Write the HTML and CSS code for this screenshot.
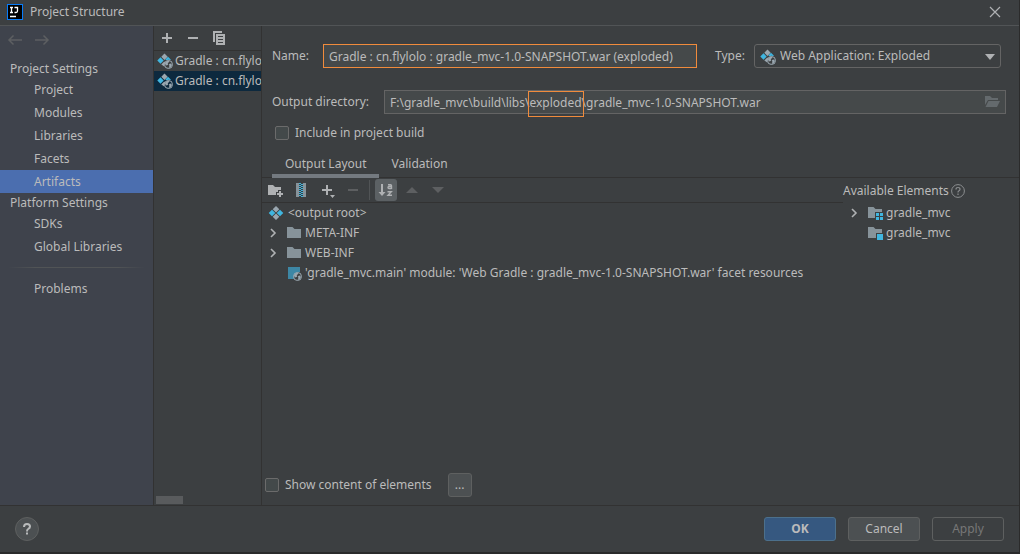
FILE: index.html
```html
<!DOCTYPE html>
<html lang="en">
<head>
<meta charset="utf-8">
<title>Project Structure</title>
<meta name="viewport" content="width=device-width, initial-scale=1">
<link rel="stylesheet" href="styles.css">
</head>
<body>
<svg class="defs" aria-hidden="true">
  <symbol id="artifact-web" viewBox="0 0 16 16">
    <path fill="#9aa7b0" d="M7.5 0.500l3.200 3.200-3.200 3.200-3.200-3.200z"/>
    <path fill="#40b6e0" d="M3.500 4.300l3.200 3.200-3.200 3.200L.3 7.500z"/>
    <path fill="#40b6e0" d="M11 3.800l3 3-1 .2a5 5 0 0 0-3.600.3L8.300 6.500z"/>
    <path fill="#9aa7b0" d="M7.300 8.500l1 1a5 5 0 0 0-.7 4.300L4.300 11.600z"/>
    <circle cx="11.500" cy="11.500" r="4" fill="none" stroke="#9aa7b0"/>
    <path fill="#9aa7b0" d="M8 10l2-2.300 2.700-.2-1 2-1 .5.600 1.500-1.600 1-1.500-1zM15 12l-1-1.500-2 .5.400 2.200-1 1.600 2.200-.3z"/>
  </symbol>
  <symbol id="artifact" viewBox="0 0 16 16">
    <path fill="#9aa7b0" d="M8 1l3.300 3.300L8 7.600 4.700 4.300zM8 8.400l3.300 3.300L8 15l-3.300-3.300z"/>
    <path fill="#40b6e0" d="M4 4.700L7.300 8 4 11.300.7 8zM12 4.700L15.300 8 12 11.300 8.700 8z"/>
  </symbol>
  <symbol id="folder" viewBox="0 0 16 16"><path fill="#87939a" d="M1 2h5.500l2 2H15v9H1z"/></symbol>
  <symbol id="folder-group" viewBox="0 0 16 16">
    <path fill="#87939a" d="M1 2h5.500l2 2H15v3H8v6H1z"/>
    <path fill="#40b6e0" d="M9 8h3v3H9zM13 8h3v3h-3zM9 12h3v3H9zM13 12h3v3h-3z"/>
  </symbol>
  <symbol id="folder-module" viewBox="0 0 16 16">
    <path fill="#87939a" d="M1 2h5.500l2 2H15v4H9v5H1z"/>
    <path fill="#40b6e0" d="M10 9h6v6h-6z"/>
  </symbol>
  <symbol id="chevron" viewBox="0 0 16 16"><path d="M6 4l4 4-4 4" fill="none" stroke="#afb1b3" stroke-width="1.600"/></symbol>
  <symbol id="plus" viewBox="0 0 16 16"><path d="M7 3h2v4h4v2H9v4H7V9H3V7h4z" fill="currentColor"/></symbol>
  <symbol id="minus" viewBox="0 0 16 16"><path d="M3 7h10v2H3z" fill="currentColor"/></symbol>
</svg>

<header class="titlebar">
  <svg class="logo" viewBox="0 0 16 16" aria-hidden="true">
    <path fill="#087cfa" d="M0 0h16v16H0z"/><path fill="#000" d="M1 1h14v14H1z"/>
    <path d="M3 3.500h3M3 8.500h3M4.500 3.500v5M7.500 3.500h3v3.500q0 1.500-1.500 1.500H7.500M3 12.500h6" fill="none" stroke="#fff" stroke-width="1.300"/>
  </svg>
  <h1 class="title">Project Structure</h1>
  <button class="icon-button close" aria-label="Close"><svg viewBox="0 0 16 16"><path d="M3 3l10 10M13 3L3 13" stroke="#afb1b3" stroke-width="1.200"/></svg></button>
</header>

<div class="workspace">
  <nav class="sidebar">
    <div class="history">
      <button class="icon-button" aria-label="Back" disabled><svg viewBox="0 0 16 16"><path d="M15 8H2.500M6.500 3.500L2 8l4.500 4.500" fill="none" stroke="currentColor" stroke-width="1.500"/></svg></button>
      <button class="icon-button" aria-label="Forward" disabled><svg viewBox="0 0 16 16"><path d="M1 8h12.500M9.500 3.500L14 8l-4.500 4.500" fill="none" stroke="currentColor" stroke-width="1.500"/></svg></button>
    </div>
    <h2 class="group">Project Settings</h2>
    <a class="link" href="#">Project</a>
    <a class="link" href="#">Modules</a>
    <a class="link" href="#">Libraries</a>
    <a class="link" href="#">Facets</a>
    <a class="link selected" href="#" aria-current="page">Artifacts</a>
    <h2 class="group">Platform Settings</h2>
    <a class="link" href="#">SDKs</a>
    <a class="link" href="#">Global Libraries</a>
    <hr class="divider">
    <a class="link" href="#">Problems</a>
  </nav>

  <section class="artifacts" aria-label="Artifacts">
    <div class="list-tools">
      <button class="icon-button" aria-label="Add"><svg><use href="#plus"/></svg></button>
      <button class="icon-button" aria-label="Remove"><svg><use href="#minus"/></svg></button>
      <button class="icon-button" aria-label="Copy"><svg viewBox="0 0 16 16"><path fill="#afb1b3" d="M2 1h9v2H4v9H2z"/><path fill="#afb1b3" fill-rule="evenodd" d="M5 4h9v11H5zM7 6v1h5V6zM7 9v1h5V9zM7 12v1h5v-1z"/></svg></button>
    </div>
    <ul class="list">
      <li class="row"><svg class="icon"><use href="#artifact-web"/></svg><span>Gradle : cn.flylolo</span></li>
      <li class="row current"><svg class="icon"><use href="#artifact-web"/></svg><span>Gradle : cn.flylolo</span></li>
    </ul>
    <div class="scrollbar"></div>
  </section>

  <main class="editor">
    <div class="form">
      <div class="name-line">
        <label for="name">Name:</label>
        <input class="field name" id="name" value="Gradle : cn.flylolo : gradle_mvc-1.0-SNAPSHOT.war (exploded)">
        <label class="type-label" for="type">Type:</label>
        <div class="type">
          <svg class="icon type-icon"><use href="#artifact-web"/></svg>
          <select class="type-select" id="type"><option>Web Application: Exploded</option></select>
          <svg class="type-arrow" viewBox="0 0 10 6"><path fill="#afb1b3" d="M0 0h10L5 6z"/></svg>
        </div>
      </div>
      <div class="dir-line">
        <label class="dir-label" for="dir">Output directory:</label>
        <div class="path">
          <input class="field" id="dir" value="F:\gradle_mvc\build\libs\exploded\gradle_mvc-1.0-SNAPSHOT.war">
          <span class="highlight"></span>
          <button class="icon-button browse" aria-label="Browse"><svg viewBox="0 0 16 16"><path fill="#646a6d" d="M1 2h5l2 2h6v2H4l-3 5z"/><path fill="#646a6d" d="M4.500 7H16l-3 6H1.500z"/></svg></button>
        </div>
      </div>
      <label class="check include"><input class="box" type="checkbox">Include in project build</label>
    </div>

    <div class="tabs" role="tablist">
      <button class="tab active" role="tab" aria-selected="true">Output Layout</button>
      <button class="tab" role="tab" aria-selected="false">Validation</button>
    </div>

    <div class="panes">
      <section class="layout">
        <div class="tools">
          <button class="icon-button" aria-label="New folder"><svg viewBox="0 0 16 16"><path fill="#afb1b3" d="M1 3h5l2 2h6v3h-3v2H9v3H1z"/><path fill="#afb1b3" d="M12 9h2v2h2v2h-2v2h-2v-2h-2v-2h2z"/></svg></button>
          <button class="icon-button" aria-label="New archive"><svg viewBox="0 0 16 16"><path fill="#87939a" d="M3 1h3v14H3zM10 1h3v14h-3z"/><path fill="none" stroke="#40b6e0" stroke-width="2" stroke-dasharray="1 1" d="M7 1v14"/><path fill="none" stroke="#40b6e0" stroke-width="2" stroke-dasharray="1 1" d="M9 2v13"/></svg></button>
          <button class="icon-button" aria-label="Add copy of"><svg viewBox="0 0 16 16"><path fill="#afb1b3" d="M7 3h2v4h4v2H9v4H7V9H3V7h4zM11 13h5l-2.500 3z"/></svg></button>
          <button class="icon-button" aria-label="Remove" disabled><svg><use href="#minus"/></svg></button>
          <span class="bar"></span>
          <button class="icon-button pressed" aria-label="Sort by name"><svg viewBox="0 0 16 16"><path fill="#afb1b3" d="M3 2h2v8h2.500L4 14 .5 10H3z"/><path fill="none" stroke="#afb1b3" stroke-width="1.400" d="M10 2.700h2.500q1 0 1 1V7M13.500 4.500H11q-1 0-1 1t1 1h2.500M9.500 9.700h3.800L10 13.300h4"/></svg></button>
          <button class="icon-button" aria-label="Move up" disabled><svg viewBox="0 0 16 16"><path fill="currentColor" d="M2 11h12L8 5z"/></svg></button>
          <button class="icon-button" aria-label="Move down" disabled><svg viewBox="0 0 16 16"><path fill="currentColor" d="M2 5h12l-6 6z"/></svg></button>
        </div>
        <ul class="tree">
          <li class="node root"><svg class="icon"><use href="#artifact"/></svg><span>&lt;output root&gt;</span></li>
          <li class="node"><button class="icon-button twist" aria-label="Expand META-INF"><svg><use href="#chevron"/></svg></button><svg class="icon"><use href="#folder"/></svg><span>META-INF</span></li>
          <li class="node"><button class="icon-button twist" aria-label="Expand WEB-INF"><svg><use href="#chevron"/></svg></button><svg class="icon"><use href="#folder"/></svg><span>WEB-INF</span></li>
          <li class="node leaf"><svg class="icon" viewBox="0 0 16 16"><path fill="#3d87a5" d="M2 2h12v5a6 6 0 0 0-6 7H2z"/><circle cx="11.500" cy="11.500" r="4" fill="none" stroke="#9aa7b0"/><path fill="#9aa7b0" d="M8 10l2-2.300 2.700-.2-1 2-1 .5.600 1.500-1.600 1-1.500-1zM15 12l-1-1.500-2 .5.400 2.200-1 1.600 2.200-.3z"/></svg><span>'gradle_mvc.main' module: 'Web Gradle : gradle_mvc-1.0-SNAPSHOT.war' facet resources</span></li>
        </ul>
        <div class="options">
          <label class="check"><input class="box" type="checkbox">Show content of elements</label>
          <button class="button more">...</button>
        </div>
      </section>
      <section class="available">
        <h2 class="available-title">Available Elements<svg class="hint" viewBox="0 0 14 14"><circle cx="7" cy="7" r="6.400" fill="none" stroke="#8c8e90"/><path d="M5 5.500q0-2 2-2t2 1.700Q9 6.300 7.700 7 7 7.400 7 8.500M7 9.500V11" fill="none" stroke="#8c8e90" stroke-width="1.200"/></svg></h2>
        <ul class="tree">
          <li class="node"><button class="icon-button twist" aria-label="Expand gradle_mvc"><svg><use href="#chevron"/></svg></button><svg class="icon"><use href="#folder-group"/></svg><span>gradle_mvc</span></li>
          <li class="node leaf"><svg class="icon"><use href="#folder-module"/></svg><span>gradle_mvc</span></li>
        </ul>
      </section>
    </div>
  </main>
</div>

<footer class="footer">
  <button class="help" aria-label="Help"><svg viewBox="0 0 22 22"><path d="M8 9q0-3 3-3t3 2.500q0 1.500-1.800 2.500-1.200.700-1.200 2.500M11 14.500v2" fill="none" stroke="#b8babb" stroke-width="2"/></svg></button>
  <button class="button primary">OK</button>
  <button class="button">Cancel</button>
  <button class="button" disabled>Apply</button>
</footer>
</body>
</html>
```

FILE: styles.css
```css
* { box-sizing: border-box; }

body {
  margin: 0;
  min-height: 100vh;
  display: flex;
  flex-direction: column;
  background: #3c3f41;
  border-right: 1px solid #2b2b2b;
  border-bottom: 2px solid #292a2b;
  color: #bbbbbb;
  font: 12px/20px "Noto Sans", "Open Sans", sans-serif;
}

button, input, select { font: inherit; color: inherit; }
h1, h2, ul { margin: 0; padding: 0; font: inherit; list-style: none; }
svg { display: block; }
.defs { position: absolute; width: 0; height: 0; }
.icon { width: 16px; height: 16px; flex: none; }

.icon-button {
  display: grid;
  place-items: center;
  flex: none;
  padding: 0;
  border: 0;
  background: none;
  color: #afb1b3;
}
.icon-button svg { width: 16px; height: 16px; }
.icon-button:disabled { color: #5d5f61; }

.titlebar {
  display: flex;
  align-items: center;
  height: 26px;
  padding: 0 16px 2px 7px;
  border-bottom: 1px solid #515456;
}
.logo { width: 16px; height: 16px; margin-right: 7px; }
.close { margin-left: auto; }

.workspace { flex: 1; display: flex; min-height: 0; }

.sidebar {
  flex: none;
  width: 154px;
  background: #3f434c;
  border-right: 1px solid #323232;
}
.history { display: flex; gap: 11px; padding: 6px 7px 11px; }
.group { height: 19px; padding-left: 10px; line-height: 19px; }
.link {
  display: block;
  padding-left: 34px;
  line-height: 23px;
  color: inherit;
  text-decoration: none;
}
.selected { background: #4b6eaf; }
.divider {
  height: 1px;
  margin: 9px 8px;
  border: 0;
  background: linear-gradient(to right, transparent, #515456 20%, #515456 80%, transparent);
}

.artifacts {
  flex: none;
  display: flex;
  flex-direction: column;
  width: 108px;
  border-right: 1px solid #323232;
}
.list-tools {
  display: flex;
  gap: 10px;
  height: 25px;
  padding: 0 5px;
  border-bottom: 1px solid #323232;
}
.list { flex: 1; overflow: hidden; }
.row { display: flex; align-items: center; gap: 2px; height: 20px; padding-left: 3px; white-space: nowrap; }
.current { background: #0d293e; }
.scrollbar { width: 27px; height: 8px; margin: 0 2px 1px; background: #595b5d; }

.editor { flex: 1; min-width: 0; display: flex; flex-direction: column; }
.form { padding: 18px 13px 0 10px; }
.name-line {
  display: grid;
  grid-template-columns: 51px 374fr 57px 247fr;
  align-items: center;
  margin: 0 5px 22px 0;
}
.dir-line { display: flex; align-items: center; margin-bottom: 22px; }
.dir-label { flex: none; width: 112px; }
.field {
  width: 100%;
  min-width: 0;
  height: 24px;
  padding: 0 5px;
  border: 1px solid #646464;
  background: #45494a;
  outline: 0;
}
.name { border-color: #f08b3c; }
.type-label { padding-left: 18px; }
.type { position: relative; }
.type-select {
  display: block;
  width: 100%;
  height: 24px;
  padding: 0 24px 0 25px;
  border: 1px solid #646464;
  border-radius: 3px;
  background: #3c3f41;
  appearance: none;
}
.type-icon { position: absolute; left: 6px; top: 5px; }
.type-arrow { position: absolute; right: 6px; top: 10px; width: 10px; height: 6px; pointer-events: none; }
.path { flex: 1; position: relative; display: flex; }
.highlight { position: absolute; left: 144px; top: 1px; width: 56px; height: 26px; border: 1px solid #f08b3c; }
.browse { position: absolute; right: 6px; top: 4px; }

.check { display: flex; align-items: center; gap: 6px; }
.include { margin: -13px 3px 0; }
.box {
  width: 14px;
  height: 14px;
  margin: 0;
  border: 1px solid #6b6b6b;
  border-radius: 2px;
  background: #43494a;
  appearance: none;
}

.tabs { display: flex; height: 35px; padding: 7px 10px 0; border-bottom: 1px solid #323232; }
.tab { height: 28px; padding: 4px 12px 0 13px; border: 0; border-bottom: 4px solid transparent; background: none; }
.active { border-color: #747a80; }

.panes { flex: 1; display: flex; }
.layout { flex: 1; min-width: 0; display: flex; flex-direction: column; }
.tools {
  display: flex;
  align-items: center;
  gap: 10px;
  height: 25px;
  padding: 0 5px;
  border-bottom: 1px solid #323232;
}
.bar { width: 1px; height: 20px; margin: 0 -2px; background: #515456; }
.pressed { width: 22px; height: 22px; margin: 0 -3px; border-radius: 3px; background: #5c6164; }
.tree { flex: 1; }
.node { display: flex; align-items: center; gap: 3px; height: 20px; padding-left: 3px; white-space: nowrap; }
.root { gap: 4px; padding-left: 6px; }
.twist { width: 16px; margin-right: 2px; }
.leaf { padding-left: 24px; }
.options { display: flex; align-items: center; gap: 16px; padding: 0 3px 8px; }

.available { flex: none; width: 176px; }
.available-title { display: flex; align-items: center; gap: 2px; height: 25px; }
.hint { width: 14px; height: 14px; }

.button {
  width: 72px;
  height: 24px;
  padding: 0;
  border: 1px solid #5e6060;
  border-radius: 3px;
  background: #4c5052;
  line-height: 20px;
}
.button:disabled { background: none; color: #777777; }
.primary { border-color: #4c708c; background: #365880; font-weight: bold; }
.more { width: 24px; }

.footer {
  display: flex;
  align-items: center;
  gap: 12px;
  height: 47px;
  padding: 0 15px;
  border-top: 1px solid #323232;
}
.help {
  width: 24px;
  height: 24px;
  margin-right: auto;
  padding: 0;
  border: 1px solid #5e6060;
  border-radius: 50%;
  background: #4c5052;
}
```
